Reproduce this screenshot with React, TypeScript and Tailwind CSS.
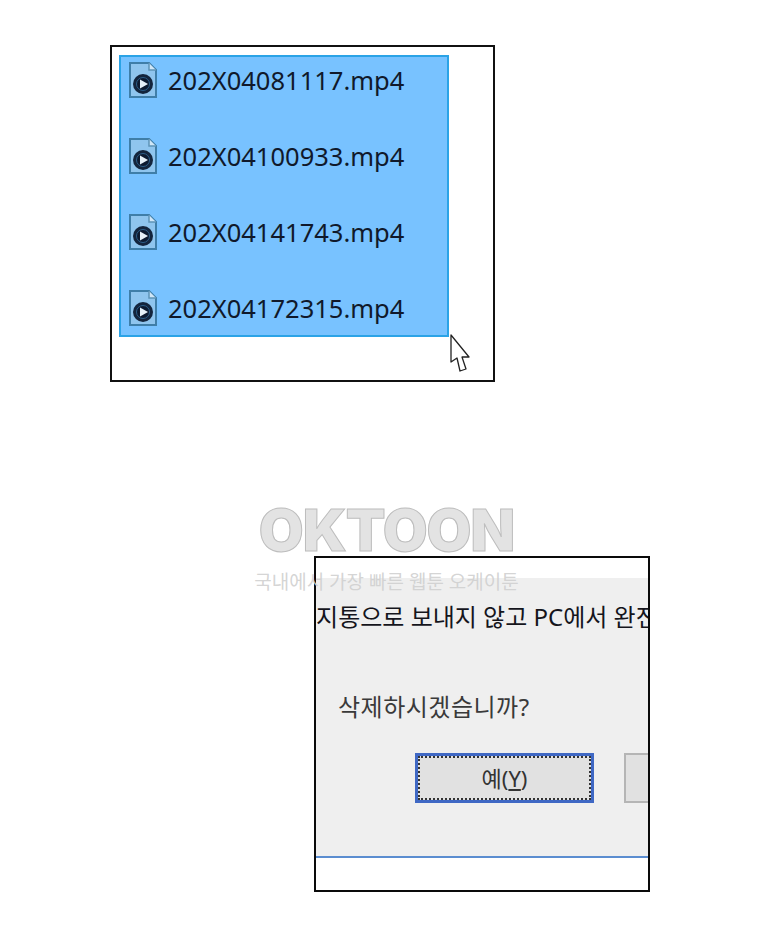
const files = ["202X04081117.mp4", "202X04100933.mp4", "202X04141743.mp4", "202X04172315.mp4"];

function FileIcon() {
  return (
    <svg width="30" height="38" viewBox="0 0 30 38" className="shrink-0">
      <path d="M2 2H21L28 9V36H2Z" fill="#8fc5ee" stroke="#3f7ea8" strokeWidth="2" />
      <path d="M21 2V9H28" fill="#cfe6f7" stroke="#5e94b8" strokeWidth="1.5" />
      <circle cx="15" cy="23" r="10" fill="#14253d" />
      <circle cx="15" cy="23" r="6.5" fill="#0d1a30" stroke="#2d5f8a" strokeWidth="1" />
      <path d="M12 18.5L20 23L12 27.5Z" fill="#e6f0f8" />
    </svg>
  );
}

function Cursor() {
  return (
    <svg width="22" height="40" viewBox="0 0 22 40" className="absolute left-[337px] top-[287px]">
      <path d="M2 1V28L8 24L11 37L17 35L13 23H20Z" fill="#ffffff" stroke="#222222" strokeWidth="1.3" strokeLinejoin="round" />
    </svg>
  );
}

export default function App() {
  return (
    <div className="relative h-[926px] w-[760px] overflow-hidden bg-white pt-[45px] font-['Noto_Sans','Noto_Sans_CJK_KR',sans-serif]">
      <div className="relative ml-[110px] h-[337px] w-[385px] border-2 border-[#111111] pl-[7px] pt-[8px]">
        <div className="flex h-[282px] w-[330px] flex-col gap-[38px] border-2 border-[#2ba3e6] bg-[#78c2ff] pl-[7px] pt-[4px]">
          {files.map((f) => (
            <div key={f} className="flex h-[38px] items-center gap-[10px]">
              <FileIcon />
              <span className="text-[25.5px] leading-[38px] text-[#10192b]">{f}</span>
            </div>
          ))}
        </div>
        <Cursor />
      </div>

      <div className="relative ml-[314px] mt-[174px] h-[336px] w-[336px] overflow-hidden border-2 border-[#0a0a0a] bg-white">
        <div className="mt-[20px] h-[280px] overflow-hidden border-b-2 border-[#5b8dd0] bg-[#efefef]">
          <div className="-ml-[22px] mt-[22px] whitespace-nowrap text-[24px] leading-[34px] text-[#15151c]">
            휴지통으로 보내지 않고 PC에서 완전히
          </div>
          <div className="ml-[22px] mt-[56px] text-[24px] leading-[34px] tracking-[0.5px] text-[#3a3a3a]">삭제하시겠습니까?</div>
          <div className="mt-[29px] flex gap-[30px] pl-[99px]">
            <div className="flex h-[50px] w-[179px] shrink-0 items-center justify-center border-[3px] border-[#3f68c4] bg-[#e1e1e1] outline-2 -outline-offset-[5px] outline-dotted outline-[#333333] text-[22px] text-[#333333]">
              예(<span className="underline">Y</span>)
            </div>
            <div className="h-[50px] w-[100px] shrink-0 border-2 border-[#b5b5b5] bg-[#e1e1e1]" />
          </div>
        </div>
      </div>

      <div className="pointer-events-none absolute left-[243px] top-[497px] flex w-[287px] flex-col items-center">
        <div className="font-['Inter',sans-serif] text-[58px] font-black leading-[66px] tracking-[-1px] text-[#e3e3e3] [-webkit-text-stroke:1px_#bdbdbd]">
          OKTOON
        </div>
        <div className="mt-[6px] whitespace-nowrap text-[19px] leading-[26px] text-[#cfcfcf]/90">국내에서 가장 빠른 웹툰 오케이툰</div>
      </div>
    </div>
  );
}
